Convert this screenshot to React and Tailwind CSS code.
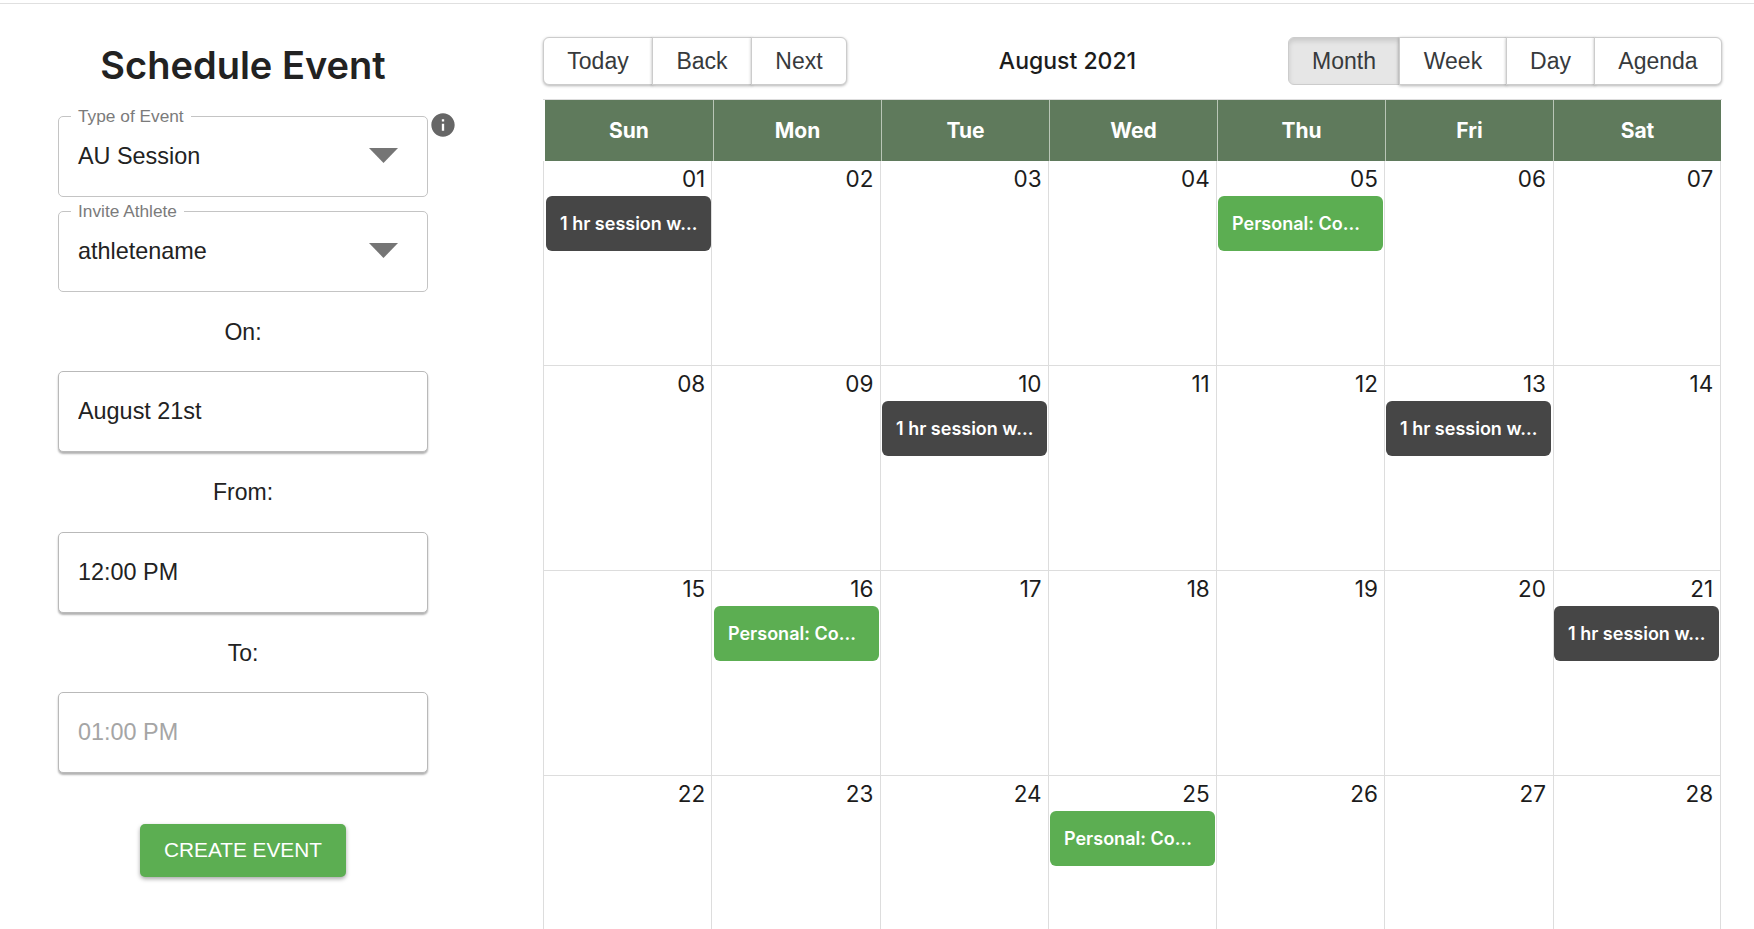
const ICON_INFO = "M12 2C6.48 2 2 6.48 2 12s4.48 10 10 10 10-4.48 10-10S17.52 2 12 2zm1 15h-2v-6h2v6zm0-8h-2V7h2v2z";
const ARIAL = "font-['Liberation_Sans',Arial,sans-serif]";
const POP = "font-['Inter',sans-serif]";

function Select({ label, value, children }) {
  return (
    <div className="relative h-[81px] w-[370px] rounded-[5px] border border-[#c4c4c4]">
      <span className="absolute -top-[10px] left-[12px] bg-white px-[7px] text-[17.3px] leading-[19px] text-[#7b7b7b]">{label}</span>
      <div className="flex h-[79px] items-center justify-between pl-[19px] pr-[29px]">
        <span className="pb-[2px] text-[23.4px] leading-[28px] text-[#222]">{value}</span>
        <svg width="29" height="15" viewBox="0 0 29 15" className="mt-[-2px]"><polygon points="0,0 29,0 14.5,15" fill="#757575" /></svg>
      </div>
      {children}
    </div>
  );
}

function Field({ value, placeholder }) {
  return (
    <input
      readOnly
      value={value || ""}
      placeholder={placeholder}
      className="block h-[81px] w-[370px] rounded-[5px] border border-[#b9b9b9] bg-white px-[19px] text-[23.4px] text-[#222] shadow-[0_2px_2px_rgba(0,0,0,0.3)] outline-none placeholder:text-[#a5a5a5]"
    />
  );
}

function Label({ children, h }) {
  return <div className={`flex items-center justify-center text-[23px] text-[#222] ${h}`}>{children}</div>;
}

function Btn({ children, active, first, last }) {
  return (
    <button
      className={`flex h-full items-center justify-center border border-[#ccc] text-[23px] text-[#373a3c] ${
        active
          ? "bg-[#e6e6e6] shadow-[inset_0_3px_5px_rgba(0,0,0,0.125)]"
          : "bg-white shadow-[0_1px_3px_rgba(0,0,0,0.3)]"
      } ${first ? "rounded-l-[6px]" : "-ml-px"} ${last ? "rounded-r-[6px]" : ""}`}
    >
      {children}
    </button>
  );
}

const DAYS = ["Sun", "Mon", "Tue", "Wed", "Thu", "Fri", "Sat"];
const WEEKS = [
  ["01", "02", "03", "04", "05", "06", "07"],
  ["08", "09", "10", "11", "12", "13", "14"],
  ["15", "16", "17", "18", "19", "20", "21"],
  ["22", "23", "24", "25", "26", "27", "28"],
];
const EVENTS = {
  "01": "s", "10": "s", "13": "s", "21": "s",
  "05": "p", "16": "p", "25": "p",
};

function Cell({ d, col, last }) {
  const ev = EVENTS[d];
  const drift = 0.28 * col;
  return (
    <div
      className={`min-w-0 border-l border-[#ddd] ${last ? "border-r" : ""}`}
      style={{ paddingLeft: 2 - drift }}
    >
      <div
        className={`h-[35px] pt-[3px] text-right text-[22.5px] leading-[30px] text-[#1c1c1c] ${POP}`}
        style={{ paddingRight: 6 + drift / 2 }}
      >
        {d}
      </div>
      {ev && (
        <div
          className={`flex h-[55px] w-[165px] items-center rounded-[6px] pl-[14px] text-[18px] font-semibold text-white ${POP} ${
            ev === "s" ? "bg-[#464646]" : "bg-[#5cae52]"
          }`}
        >
          {ev === "s" ? "1 hr session w…" : "Personal: Co…"}
        </div>
      )}
    </div>
  );
}

export default function App() {
  return (
    <div className={`h-[929px] overflow-hidden bg-white ${ARIAL}`}>
      <div className="h-[4px] border-b border-[#e0e0e0]" />
      <div className="flex">
        <div className="w-[543px] shrink-0 pl-[58px]">
          <div className="w-[370px]">
            <div className="h-[112px] pt-[36px]">
              <h1 className={`text-center text-[38px] font-semibold leading-[50px] text-[#222] ${POP}`}>Schedule Event</h1>
            </div>
            <Select label="Type of Event" value="AU Session">
              <svg width="28" height="28" viewBox="0 0 24 24" className="absolute -top-[6px] left-[370px]">
                <path d={ICON_INFO} fill="#666" />
              </svg>
            </Select>
            <div className="h-[14px]" />
            <Select label="Invite Athlete" value="athletename" />
            <Label h="h-[79px] pt-[2px]">On:</Label>
            <Field value="August 21st" />
            <Label h="h-20">From:</Label>
            <Field value="12:00 PM" />
            <Label h="h-[79px] pt-[2px]">To:</Label>
            <Field placeholder="01:00 PM" />
            <button className="mx-auto mt-[51px] block h-[53px] w-[206px] rounded-[5px] bg-[#5cae52] pb-[2px] text-[20.8px] text-white shadow-[0_2px_4px_rgba(0,0,0,0.35)]">
              CREATE EVENT
            </button>
          </div>
        </div>

        <div className="w-[1179px] shrink-0 pt-[33px]">
          <div className="flex h-[48px] items-center justify-between">
            <div className="flex h-full">
              <div className="grid h-full grid-cols-[110px_99px_95px]">
                <Btn first>Today</Btn>
                <Btn>Back</Btn>
                <Btn last>Next</Btn>
              </div>
            </div>
            <div className={`text-[23px] font-medium text-[#1c1c1c] ${POP}`}>August 2021</div>
            <div className="grid h-full grid-cols-[112px_107px_88px_127px]">
              <Btn active first>Month</Btn>
              <Btn>Week</Btn>
              <Btn>Day</Btn>
              <Btn last>Agenda</Btn>
            </div>
          </div>
          <div className="mt-[14px] border-t border-[#ddd] pl-[2px]">
            <div className="grid h-[61px] w-[1176px] grid-cols-7 bg-[#5f7a5c]">
              {DAYS.map((d, i) => (
                <div
                  key={d}
                  className={`flex items-center justify-center text-[21px] font-bold text-white ${POP} ${
                    i ? "border-l border-[#b9c5b6]" : ""
                  }`}
                >
                  {d}
                </div>
              ))}
            </div>
          </div>
          <div>
            {WEEKS.map((w, i) => (
              <div key={i} className={`grid w-[1178px] grid-cols-7 ${i ? "h-[205px] border-t border-[#ddd]" : "h-[204px]"}`}>
                {w.map((d, j) => (
                  <Cell key={d} d={d} col={j} last={j === 6} />
                ))}
              </div>
            ))}
          </div>
        </div>
      </div>
    </div>
  );
}
